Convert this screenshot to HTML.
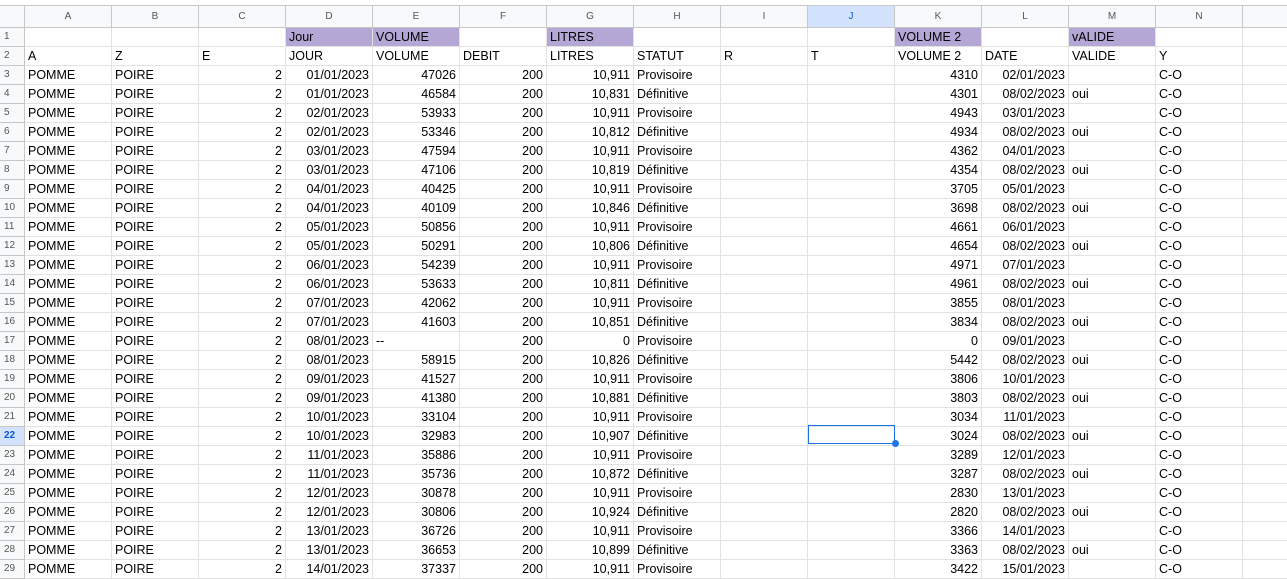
<!DOCTYPE html><html><head><meta charset="utf-8"><style>
body{margin:0;background:#fff;width:1287px;height:569px;overflow:hidden;font-family:"Liberation Sans",Arial,sans-serif}
table{position:absolute;left:-1px;top:5px;border-collapse:collapse;table-layout:fixed;width:1325px}
td{border:1px solid #e2e2e2;height:18px;padding:0 3px;font-size:12.5px;color:#000;white-space:nowrap;overflow:hidden;line-height:18px;vertical-align:bottom}
tr.h td{height:21px;background:#f8f9fa;color:#555;font-size:10px;text-align:center;vertical-align:middle;border-color:#c7c7c7}
td.rh{background:#f8f9fa;color:#555;font-size:10px;text-align:left;padding-left:4px;border-color:#c7c7c7}
.r{text-align:right}.p{background:#b4a7d6}
.sel{background:#d3e3fd!important;color:#0b57d0!important}
td.rs{background:#d3e3fd;color:#0b57d0;font-weight:bold}
.cur{position:absolute;left:808px;top:425px;width:85px;height:17px;border:1px solid #1a73e8}
.dot{position:absolute;left:892px;top:440px;width:7px;height:7px;border-radius:50%;background:#1a73e8}
</style></head><body>
<table>
<colgroup><col style="width:25px"><col style="width:87px"><col style="width:87px"><col style="width:87px"><col style="width:87px"><col style="width:87px"><col style="width:87px"><col style="width:87px"><col style="width:87px"><col style="width:87px"><col style="width:87px"><col style="width:87px"><col style="width:87px"><col style="width:87px"><col style="width:87px"><col style="width:87px"></colgroup>
<tr class="h"><td></td><td>A</td><td>B</td><td>C</td><td>D</td><td>E</td><td>F</td><td>G</td><td>H</td><td>I</td><td class="sel">J</td><td>K</td><td>L</td><td>M</td><td>N</td><td></td></tr>
<tr><td class="rh">1</td><td></td><td></td><td></td><td class="p">Jour</td><td class="p">VOLUME</td><td></td><td class="p">LITRES</td><td></td><td></td><td></td><td class="p">VOLUME 2</td><td></td><td class="p">vALIDE</td><td></td><td></td></tr>
<tr><td class="rh">2</td><td>A</td><td>Z</td><td>E</td><td>JOUR</td><td>VOLUME</td><td>DEBIT</td><td>LITRES</td><td>STATUT</td><td>R</td><td>T</td><td>VOLUME 2</td><td>DATE</td><td>VALIDE</td><td>Y</td><td></td></tr>
<tr><td class="rh">3</td><td>POMME</td><td>POIRE</td><td class="r">2</td><td class="r">01/01/2023</td><td class="r">47026</td><td class="r">200</td><td class="r">10,911</td><td>Provisoire</td><td></td><td></td><td class="r">4310</td><td class="r">02/01/2023</td><td></td><td>C-O</td><td></td></tr>
<tr><td class="rh">4</td><td>POMME</td><td>POIRE</td><td class="r">2</td><td class="r">01/01/2023</td><td class="r">46584</td><td class="r">200</td><td class="r">10,831</td><td>Définitive</td><td></td><td></td><td class="r">4301</td><td class="r">08/02/2023</td><td>oui</td><td>C-O</td><td></td></tr>
<tr><td class="rh">5</td><td>POMME</td><td>POIRE</td><td class="r">2</td><td class="r">02/01/2023</td><td class="r">53933</td><td class="r">200</td><td class="r">10,911</td><td>Provisoire</td><td></td><td></td><td class="r">4943</td><td class="r">03/01/2023</td><td></td><td>C-O</td><td></td></tr>
<tr><td class="rh">6</td><td>POMME</td><td>POIRE</td><td class="r">2</td><td class="r">02/01/2023</td><td class="r">53346</td><td class="r">200</td><td class="r">10,812</td><td>Définitive</td><td></td><td></td><td class="r">4934</td><td class="r">08/02/2023</td><td>oui</td><td>C-O</td><td></td></tr>
<tr><td class="rh">7</td><td>POMME</td><td>POIRE</td><td class="r">2</td><td class="r">03/01/2023</td><td class="r">47594</td><td class="r">200</td><td class="r">10,911</td><td>Provisoire</td><td></td><td></td><td class="r">4362</td><td class="r">04/01/2023</td><td></td><td>C-O</td><td></td></tr>
<tr><td class="rh">8</td><td>POMME</td><td>POIRE</td><td class="r">2</td><td class="r">03/01/2023</td><td class="r">47106</td><td class="r">200</td><td class="r">10,819</td><td>Définitive</td><td></td><td></td><td class="r">4354</td><td class="r">08/02/2023</td><td>oui</td><td>C-O</td><td></td></tr>
<tr><td class="rh">9</td><td>POMME</td><td>POIRE</td><td class="r">2</td><td class="r">04/01/2023</td><td class="r">40425</td><td class="r">200</td><td class="r">10,911</td><td>Provisoire</td><td></td><td></td><td class="r">3705</td><td class="r">05/01/2023</td><td></td><td>C-O</td><td></td></tr>
<tr><td class="rh">10</td><td>POMME</td><td>POIRE</td><td class="r">2</td><td class="r">04/01/2023</td><td class="r">40109</td><td class="r">200</td><td class="r">10,846</td><td>Définitive</td><td></td><td></td><td class="r">3698</td><td class="r">08/02/2023</td><td>oui</td><td>C-O</td><td></td></tr>
<tr><td class="rh">11</td><td>POMME</td><td>POIRE</td><td class="r">2</td><td class="r">05/01/2023</td><td class="r">50856</td><td class="r">200</td><td class="r">10,911</td><td>Provisoire</td><td></td><td></td><td class="r">4661</td><td class="r">06/01/2023</td><td></td><td>C-O</td><td></td></tr>
<tr><td class="rh">12</td><td>POMME</td><td>POIRE</td><td class="r">2</td><td class="r">05/01/2023</td><td class="r">50291</td><td class="r">200</td><td class="r">10,806</td><td>Définitive</td><td></td><td></td><td class="r">4654</td><td class="r">08/02/2023</td><td>oui</td><td>C-O</td><td></td></tr>
<tr><td class="rh">13</td><td>POMME</td><td>POIRE</td><td class="r">2</td><td class="r">06/01/2023</td><td class="r">54239</td><td class="r">200</td><td class="r">10,911</td><td>Provisoire</td><td></td><td></td><td class="r">4971</td><td class="r">07/01/2023</td><td></td><td>C-O</td><td></td></tr>
<tr><td class="rh">14</td><td>POMME</td><td>POIRE</td><td class="r">2</td><td class="r">06/01/2023</td><td class="r">53633</td><td class="r">200</td><td class="r">10,811</td><td>Définitive</td><td></td><td></td><td class="r">4961</td><td class="r">08/02/2023</td><td>oui</td><td>C-O</td><td></td></tr>
<tr><td class="rh">15</td><td>POMME</td><td>POIRE</td><td class="r">2</td><td class="r">07/01/2023</td><td class="r">42062</td><td class="r">200</td><td class="r">10,911</td><td>Provisoire</td><td></td><td></td><td class="r">3855</td><td class="r">08/01/2023</td><td></td><td>C-O</td><td></td></tr>
<tr><td class="rh">16</td><td>POMME</td><td>POIRE</td><td class="r">2</td><td class="r">07/01/2023</td><td class="r">41603</td><td class="r">200</td><td class="r">10,851</td><td>Définitive</td><td></td><td></td><td class="r">3834</td><td class="r">08/02/2023</td><td>oui</td><td>C-O</td><td></td></tr>
<tr><td class="rh">17</td><td>POMME</td><td>POIRE</td><td class="r">2</td><td class="r">08/01/2023</td><td>--</td><td class="r">200</td><td class="r">0</td><td>Provisoire</td><td></td><td></td><td class="r">0</td><td class="r">09/01/2023</td><td></td><td>C-O</td><td></td></tr>
<tr><td class="rh">18</td><td>POMME</td><td>POIRE</td><td class="r">2</td><td class="r">08/01/2023</td><td class="r">58915</td><td class="r">200</td><td class="r">10,826</td><td>Définitive</td><td></td><td></td><td class="r">5442</td><td class="r">08/02/2023</td><td>oui</td><td>C-O</td><td></td></tr>
<tr><td class="rh">19</td><td>POMME</td><td>POIRE</td><td class="r">2</td><td class="r">09/01/2023</td><td class="r">41527</td><td class="r">200</td><td class="r">10,911</td><td>Provisoire</td><td></td><td></td><td class="r">3806</td><td class="r">10/01/2023</td><td></td><td>C-O</td><td></td></tr>
<tr><td class="rh">20</td><td>POMME</td><td>POIRE</td><td class="r">2</td><td class="r">09/01/2023</td><td class="r">41380</td><td class="r">200</td><td class="r">10,881</td><td>Définitive</td><td></td><td></td><td class="r">3803</td><td class="r">08/02/2023</td><td>oui</td><td>C-O</td><td></td></tr>
<tr><td class="rh">21</td><td>POMME</td><td>POIRE</td><td class="r">2</td><td class="r">10/01/2023</td><td class="r">33104</td><td class="r">200</td><td class="r">10,911</td><td>Provisoire</td><td></td><td></td><td class="r">3034</td><td class="r">11/01/2023</td><td></td><td>C-O</td><td></td></tr>
<tr><td class="rh rs">22</td><td>POMME</td><td>POIRE</td><td class="r">2</td><td class="r">10/01/2023</td><td class="r">32983</td><td class="r">200</td><td class="r">10,907</td><td>Définitive</td><td></td><td></td><td class="r">3024</td><td class="r">08/02/2023</td><td>oui</td><td>C-O</td><td></td></tr>
<tr><td class="rh">23</td><td>POMME</td><td>POIRE</td><td class="r">2</td><td class="r">11/01/2023</td><td class="r">35886</td><td class="r">200</td><td class="r">10,911</td><td>Provisoire</td><td></td><td></td><td class="r">3289</td><td class="r">12/01/2023</td><td></td><td>C-O</td><td></td></tr>
<tr><td class="rh">24</td><td>POMME</td><td>POIRE</td><td class="r">2</td><td class="r">11/01/2023</td><td class="r">35736</td><td class="r">200</td><td class="r">10,872</td><td>Définitive</td><td></td><td></td><td class="r">3287</td><td class="r">08/02/2023</td><td>oui</td><td>C-O</td><td></td></tr>
<tr><td class="rh">25</td><td>POMME</td><td>POIRE</td><td class="r">2</td><td class="r">12/01/2023</td><td class="r">30878</td><td class="r">200</td><td class="r">10,911</td><td>Provisoire</td><td></td><td></td><td class="r">2830</td><td class="r">13/01/2023</td><td></td><td>C-O</td><td></td></tr>
<tr><td class="rh">26</td><td>POMME</td><td>POIRE</td><td class="r">2</td><td class="r">12/01/2023</td><td class="r">30806</td><td class="r">200</td><td class="r">10,924</td><td>Définitive</td><td></td><td></td><td class="r">2820</td><td class="r">08/02/2023</td><td>oui</td><td>C-O</td><td></td></tr>
<tr><td class="rh">27</td><td>POMME</td><td>POIRE</td><td class="r">2</td><td class="r">13/01/2023</td><td class="r">36726</td><td class="r">200</td><td class="r">10,911</td><td>Provisoire</td><td></td><td></td><td class="r">3366</td><td class="r">14/01/2023</td><td></td><td>C-O</td><td></td></tr>
<tr><td class="rh">28</td><td>POMME</td><td>POIRE</td><td class="r">2</td><td class="r">13/01/2023</td><td class="r">36653</td><td class="r">200</td><td class="r">10,899</td><td>Définitive</td><td></td><td></td><td class="r">3363</td><td class="r">08/02/2023</td><td>oui</td><td>C-O</td><td></td></tr>
<tr><td class="rh">29</td><td>POMME</td><td>POIRE</td><td class="r">2</td><td class="r">14/01/2023</td><td class="r">37337</td><td class="r">200</td><td class="r">10,911</td><td>Provisoire</td><td></td><td></td><td class="r">3422</td><td class="r">15/01/2023</td><td></td><td>C-O</td><td></td></tr>
</table>
<div class="cur"></div><div class="dot"></div>
</body></html>
